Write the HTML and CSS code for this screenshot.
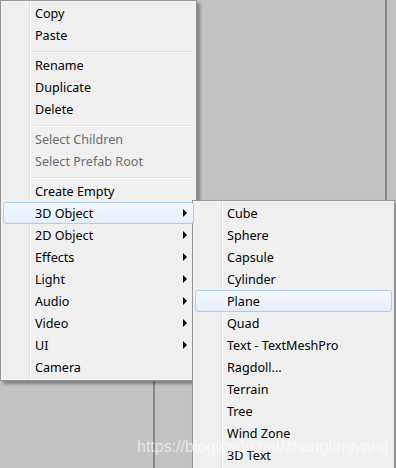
FILE: index.html
```html
<!DOCTYPE html>
<html lang="en">

<head>
 <meta charset="UTF-8">
 <meta name="viewport" content="width=device-width, initial-scale=1.0">
 <title>Hierarchy context menu</title>
 <link rel="stylesheet" href="styles.css">
</head>

<body>

 <div class="editor">
  <div class="pane pane-left"></div>
  <div class="pane pane-mid"></div>
  <div class="pane pane-right"></div>
 </div>

 <!-- menu principal -->
 <ul class="menu menu-main">
  <li class="item">Copy</li>
  <li class="item">Paste</li>
  <li class="sep"></li>
  <li class="item">Rename</li>
  <li class="item">Duplicate</li>
  <li class="item">Delete</li>
  <li class="sep"></li>
  <li class="item disabled">Select Children</li>
  <li class="item disabled">Select Prefab Root</li>
  <li class="sep"></li>
  <li class="item">Create Empty</li>
  <li class="item has-sub active">3D Object</li>
  <li class="item has-sub">2D Object</li>
  <li class="item has-sub">Effects</li>
  <li class="item has-sub">Light</li>
  <li class="item has-sub">Audio</li>
  <li class="item has-sub">Video</li>
  <li class="item has-sub">UI</li>
  <li class="item">Camera</li>
 </ul>

 <!-- submenu 3D Object -->
 <ul class="menu menu-sub">
  <li class="item">Cube</li>
  <li class="item">Sphere</li>
  <li class="item">Capsule</li>
  <li class="item">Cylinder</li>
  <li class="item active">Plane</li>
  <li class="item">Quad</li>
  <li class="item">Text - TextMeshPro</li>
  <li class="item">Ragdoll...</li>
  <li class="item">Terrain</li>
  <li class="item">Tree</li>
  <li class="item">Wind Zone</li>
  <li class="item">3D Text</li>
 </ul>

 <div class="watermark">https://blog.csdn.net/zhangtingyang</div>

</body>

</html>
```

FILE: styles.css
```css
 :root {
  --menu-font: "Noto Sans", sans-serif;
  --menu-bg: #f0f0f0;
  --menu-border: #979797;
  --editor-bg: #c3c3c3;
  --divider: #8a8a8a;
  --hover-border: #a9cdf4;
 }

 html {
  box-sizing: border-box;
  font-family: var(--menu-font);
 }

 *,
 *::before,
 *::after {
  box-sizing: inherit;
 }

 body {
  margin: 0;
  height: 100vh;
  overflow: hidden;
  background-color: var(--editor-bg);
 }

 /*  - - - Fondo del editor - - -  */
 .editor {
  display: flex;
  height: 100%;
 }

 .pane {
  flex: none;
  height: 100%;
 }

 .pane-left {
  width: 155px;
  border-right: 2px solid var(--divider);
 }

 .pane-mid {
  width: 232px;
  border-right: 2px solid var(--divider);
 }

 .pane-right {
  flex: 1;
 }

 /*  - - - Menus - - -  */
 .menu {
  position: absolute;
  margin: 0;
  padding: 1px 2px 2px;
  list-style: none;
  background-color: var(--menu-bg);
  border: 1px solid var(--menu-border);
  box-shadow: 3px 3px 3px rgba(0, 0, 0, 0.35);
  font-size: 12.6px;
  color: #000;
 }

 /* linea del margen de iconos */
 .menu::before {
  content: "";
  position: absolute;
  top: 0;
  bottom: 0;
  left: 28px;
  width: 1px;
  background-color: #e2e3e3;
  box-shadow: 1px 0 0 #fff;
 }

 .menu-main {
  top: 0;
  left: 0;
  width: 197px;
 }

 .menu-sub {
  top: 200px;
  left: 192px;
  width: 203px;
 }

 .item {
  position: relative;
  z-index: 1;
  height: 22px;
  padding: 1px 0 0 31px;
  line-height: 20px;
  border: 1px solid transparent;
  border-radius: 3px;
  white-space: nowrap;
 }

 .item.active {
  border-color: var(--hover-border);
  background: linear-gradient(#f6f9fe, #e4eefa);
 }

 .item.disabled {
  color: #6d6d6d;
 }

 .has-sub::after {
  content: "";
  position: absolute;
  top: 6px;
  right: 6px;
  border-left: 4px solid #000;
  border-top: 4px solid transparent;
  border-bottom: 4px solid transparent;
 }

 .sep {
  height: 0;
  margin: 5px 0 1px 27px;
  border-top: 1px solid #e0e0e0;
  border-bottom: 1px solid #fff;
 }

 .watermark {
  position: absolute;
  top: 438px;
  left: 137px;
  z-index: 5;
  font-family: "Liberation Sans", sans-serif;
  font-size: 16px;
  color: rgba(255, 255, 255, 0.6);
  white-space: nowrap;
 }
```
